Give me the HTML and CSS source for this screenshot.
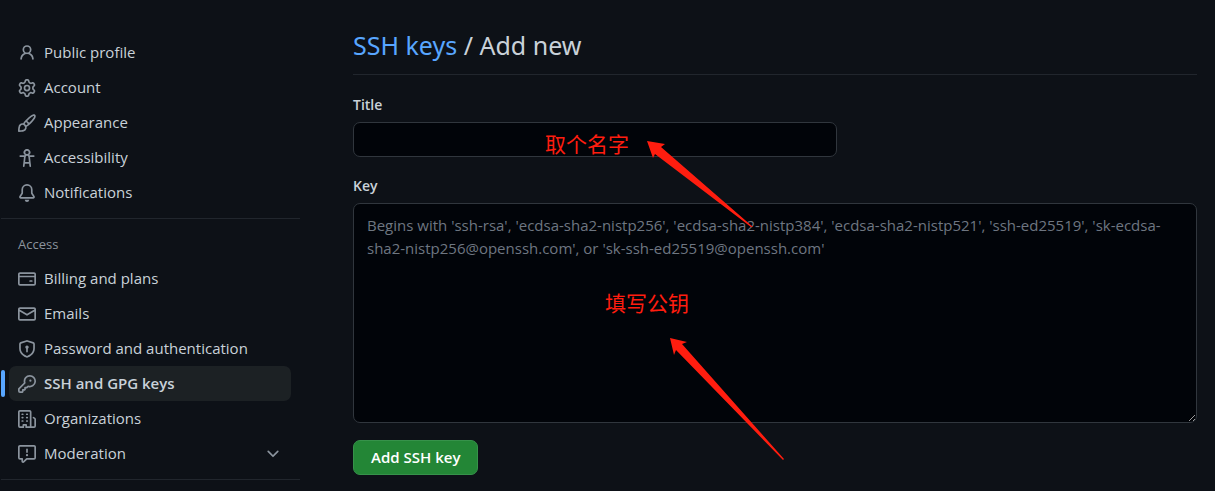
FILE: index.html
```html
<!DOCTYPE html>
<html lang="en">
<head>
<meta charset="utf-8">
<meta name="viewport" content="width=device-width, initial-scale=1">
<title>Add new SSH key</title>
<link rel="stylesheet" href="styles.css">
</head>
<body>
<div class="layout">
  <nav class="sidebar" aria-label="Settings">
    <ul class="nav-list">
      <li><a class="nav-item" href="#profile"><svg class="icon" viewBox="0 0 16 16" aria-hidden="true"><path d="M10.561 8.073a6.005 6.005 0 0 1 3.432 5.142.75.75 0 1 1-1.498.07 4.5 4.5 0 0 0-8.99 0 .75.75 0 0 1-1.498-.07 6.004 6.004 0 0 1 3.431-5.142 3.999 3.999 0 1 1 5.123 0ZM10.5 5a2.5 2.5 0 1 0-5 0 2.5 2.5 0 0 0 5 0Z"/></svg><span>Public profile</span></a></li>
      <li><a class="nav-item" href="#account"><svg class="icon" viewBox="0 0 16 16" aria-hidden="true"><path d="M8 0a8.2 8.2 0 0 1 .701.031C9.444.095 9.99.645 10.16 1.29l.288 1.107c.018.066.079.158.212.224.231.114.454.243.668.386.123.082.233.09.299.071l1.103-.303c.644-.176 1.392.021 1.82.63.27.385.506.792.704 1.218.315.675.111 1.422-.364 1.891l-.814.806c-.049.048-.098.147-.088.294.016.257.016.515 0 .772-.01.147.038.246.088.294l.814.806c.475.469.679 1.216.364 1.891a7.977 7.977 0 0 1-.704 1.217c-.428.61-1.176.807-1.82.63l-1.102-.302c-.067-.019-.177-.011-.3.071a5.909 5.909 0 0 1-.668.386c-.133.066-.194.158-.211.224l-.29 1.106c-.168.646-.715 1.196-1.458 1.26a8.006 8.006 0 0 1-1.402 0c-.743-.064-1.289-.614-1.458-1.26l-.289-1.106c-.018-.066-.079-.158-.212-.224a5.738 5.738 0 0 1-.668-.386c-.123-.082-.233-.09-.299-.071l-1.103.303c-.644.176-1.392-.021-1.82-.63a8.12 8.12 0 0 1-.704-1.218c-.315-.675-.111-1.422.363-1.891l.815-.806c.05-.048.098-.147.088-.294a6.214 6.214 0 0 1 0-.772c.01-.147-.038-.246-.088-.294l-.815-.806C.635 6.045.431 5.298.746 4.623a7.92 7.92 0 0 1 .704-1.217c.428-.61 1.176-.807 1.82-.63l1.102.302c.067.019.177.011.3-.071.214-.143.437-.272.668-.386.133-.066.194-.158.211-.224l.29-1.106C6.009.645 6.556.095 7.299.03 7.53.01 7.764 0 8 0Zm-.571 1.525c-.036.003-.108.036-.137.146l-.289 1.105c-.147.561-.549.967-.998 1.189-.173.086-.34.183-.5.29-.417.278-.97.423-1.529.27l-1.103-.303c-.109-.03-.175.016-.195.045-.22.312-.412.644-.573.99-.014.031-.021.11.059.19l.815.806c.411.406.562.957.53 1.456a4.709 4.709 0 0 0 0 .582c.032.499-.119 1.05-.53 1.456l-.815.806c-.081.08-.073.159-.059.19.162.346.353.677.573.989.02.03.085.076.195.046l1.102-.303c.56-.153 1.113-.008 1.53.27.161.107.328.204.501.29.447.222.85.629.997 1.189l.289 1.105c.029.109.101.143.137.146a6.6 6.6 0 0 0 1.142 0c.036-.003.108-.036.137-.146l.289-1.105c.147-.561.549-.967.998-1.189.173-.086.34-.183.5-.29.417-.278.97-.423 1.529-.27l1.103.303c.109.029.175-.016.195-.045.22-.313.411-.644.573-.99.014-.031.021-.11-.059-.19l-.815-.806c-.411-.406-.562-.957-.53-1.456a4.709 4.709 0 0 0 0-.582c-.032-.499.119-1.05.53-1.456l.815-.806c.081-.08.073-.159.059-.19a6.464 6.464 0 0 0-.573-.989c-.02-.03-.085-.076-.195-.046l-1.102.303c-.56.153-1.113.008-1.53-.27a4.44 4.44 0 0 0-.501-.29c-.447-.222-.85-.629-.997-1.189l-.289-1.105c-.029-.11-.101-.143-.137-.146a6.6 6.6 0 0 0-1.142 0ZM11 8a3 3 0 1 1-6 0 3 3 0 0 1 6 0ZM9.5 8a1.5 1.5 0 1 0-3.001.001A1.5 1.5 0 0 0 9.5 8Z"/></svg><span>Account</span></a></li>
      <li><a class="nav-item" href="#appearance"><svg class="icon" viewBox="0 0 16 16" aria-hidden="true"><path d="M11.134 1.535c.7-.509 1.416-.942 2.076-1.155.649-.21 1.463-.267 2.069.34.603.601.568 1.411.368 2.07-.202.668-.624 1.39-1.125 2.096-1.011 1.424-2.496 2.987-3.775 4.249-1.098 1.084-2.132 1.839-3.04 2.3a3.744 3.744 0 0 1-1.055 3.217c-.431.431-1.065.691-1.657.861-.614.177-1.294.287-1.914.357A21.151 21.151 0 0 1 .797 16H.743a.75.75 0 0 1-.743-.743v-.054a21.25 21.25 0 0 1 .13-2.284c.067-.647.187-1.287.358-1.914.17-.591.43-1.226.86-1.657a3.746 3.746 0 0 1 3.227-1.054c.466-.893 1.225-1.907 2.314-2.982 1.271-1.255 2.833-2.75 4.245-3.777ZM1.62 13.089c-.051.464-.086.929-.104 1.395.466-.018.932-.053 1.396-.104a10.511 10.511 0 0 0 1.668-.309c.526-.151.856-.325 1.011-.48a2.25 2.25 0 1 0-3.182-3.182c-.155.155-.329.485-.48 1.01a10.515 10.515 0 0 0-.309 1.67Zm10.396-10.34c-1.224.89-2.605 2.189-3.822 3.384l1.718 1.718c1.21-1.205 2.51-2.597 3.387-3.833.47-.662.78-1.227.912-1.662.134-.444.032-.551.009-.575h-.001V1.78c-.014-.014-.113-.113-.548.027-.432.14-.995.462-1.655.942Zm-4.832 7.266-.001.001a9.859 9.859 0 0 0 1.63-1.142L7.155 7.216a9.7 9.7 0 0 0-1.161 1.607c.482.302.889.71 1.19 1.192Z"/></svg><span>Appearance</span></a></li>
      <li><a class="nav-item" href="#accessibility"><svg class="icon" viewBox="0 0 16 16" aria-hidden="true"><path d="M9.923 5.302c.063.063.122.129.178.198H14A.75.75 0 0 1 14 7h-3.3l.578 5.163.362 2.997a.75.75 0 0 1-1.49.18L9.868 13H6.132l-.282 2.34a.75.75 0 0 1-1.49-.18l.362-2.997L5.3 7H2a.75.75 0 0 1 0-1.5h3.9a2.54 2.54 0 0 1 .176-.198 3 3 0 1 1 3.847 0ZM9.2 7.073h-.001a1.206 1.206 0 0 0-2.398 0L6.305 11.5h3.39ZM9.5 3a1.5 1.5 0 1 0-3.001.001A1.5 1.5 0 0 0 9.5 3Z"/></svg><span>Accessibility</span></a></li>
      <li><a class="nav-item" href="#notifications"><svg class="icon" viewBox="0 0 16 16" aria-hidden="true"><path d="M8 16a2 2 0 0 0 1.985-1.75c.017-.137-.097-.25-.235-.25h-3.5c-.138 0-.252.113-.235.25A2 2 0 0 0 8 16ZM3 5a5 5 0 0 1 10 0v2.947c0 .05.015.098.042.139l1.703 2.555A1.519 1.519 0 0 1 13.482 13H2.518a1.516 1.516 0 0 1-1.263-2.36l1.703-2.554A.255.255 0 0 0 3 7.947Zm5-3.5A3.5 3.5 0 0 0 4.5 5v2.947c0 .346-.102.683-.294.97l-1.703 2.556a.017.017 0 0 0-.003.01l.001.006c0 .002.002.004.004.006l.006.004.007.001h10.964l.007-.001.006-.004.004-.006.001-.007a.017.017 0 0 0-.003-.01l-1.703-2.554a1.745 1.745 0 0 1-.294-.97V5A3.5 3.5 0 0 0 8 1.5Z"/></svg><span>Notifications</span></a></li>
    </ul>
    <h2 class="nav-heading">Access</h2>
    <ul class="nav-list">
      <li><a class="nav-item" href="#billing"><svg class="icon" viewBox="0 0 16 16" aria-hidden="true"><path d="M10.75 9a.75.75 0 0 0 0 1.5h1.5a.75.75 0 0 0 0-1.5h-1.5Z"/><path d="M0 3.75C0 2.784.784 2 1.75 2h12.5c.966 0 1.75.784 1.75 1.75v8.5A1.75 1.75 0 0 1 14.25 14H1.75A1.75 1.75 0 0 1 0 12.25ZM14.5 6.5h-13v5.75c0 .138.112.25.25.25h12.5a.25.25 0 0 0 .25-.25Zm0-2.75a.25.25 0 0 0-.25-.25H1.75a.25.25 0 0 0-.25.25V5h13Z"/></svg><span>Billing and plans</span></a></li>
      <li><a class="nav-item" href="#emails"><svg class="icon" viewBox="0 0 16 16" aria-hidden="true"><path d="M1.75 2h12.5c.966 0 1.75.784 1.75 1.75v8.5A1.75 1.75 0 0 1 14.25 14H1.75A1.75 1.75 0 0 1 0 12.25v-8.5C0 2.784.784 2 1.75 2ZM1.5 12.251c0 .138.112.25.25.25h12.5a.25.25 0 0 0 .25-.25V5.809L8.38 9.397a.75.75 0 0 1-.76 0L1.5 5.809v6.442Zm13-8.181v-.32a.25.25 0 0 0-.25-.25H1.75a.25.25 0 0 0-.25.25v.32L8 7.88Z"/></svg><span>Emails</span></a></li>
      <li><a class="nav-item" href="#password"><svg class="icon" viewBox="0 0 16 16" aria-hidden="true"><path d="m8.533.133 5.25 1.68A1.75 1.75 0 0 1 15 3.48V7c0 1.566-.32 3.182-1.303 4.682-.983 1.498-2.585 2.813-5.032 3.855a1.697 1.697 0 0 1-1.33 0c-2.447-1.042-4.049-2.357-5.032-3.855C1.32 10.182 1 8.566 1 7V3.48a1.75 1.75 0 0 1 1.217-1.667l5.25-1.68a1.748 1.748 0 0 1 1.066 0Zm-.61 1.429.001.001-5.25 1.68a.251.251 0 0 0-.174.237V7c0 1.36.275 2.666 1.057 3.859.784 1.194 2.121 2.342 4.366 3.298a.196.196 0 0 0 .154 0c2.245-.957 3.582-2.103 4.366-3.297C13.225 9.666 13.5 8.358 13.5 7V3.48a.25.25 0 0 0-.174-.238l-5.25-1.68a.25.25 0 0 0-.153 0ZM9.5 6.5c0 .536-.286 1.032-.75 1.3v2.45a.75.75 0 0 1-1.5 0V7.8A1.5 1.5 0 1 1 9.5 6.5Z"/></svg><span>Password and authentication</span></a></li>
      <li><a class="nav-item nav-item-current" href="#keys" aria-current="page"><svg class="icon" viewBox="0 0 16 16" aria-hidden="true"><path d="M10.5 0a5.499 5.499 0 1 1-1.288 10.848l-.932.932a.749.749 0 0 1-.53.22H7v.75a.749.749 0 0 1-.22.53l-.5.5a.749.749 0 0 1-.53.22H5v.75a.749.749 0 0 1-.22.53l-.5.5a.749.749 0 0 1-.53.22h-2A1.75 1.75 0 0 1 0 14.25v-2c0-.199.079-.389.22-.53l4.932-4.932A5.5 5.5 0 0 1 10.5 0Zm-4 5.5c-.001.431.069.86.205 1.269a.75.75 0 0 1-.181.768L1.5 12.56v1.69c0 .138.112.25.25.25h1.69l.06-.06v-1.19a.75.75 0 0 1 .75-.75h1.19l.06-.06v-1.19a.75.75 0 0 1 .75-.75h1.19l1.023-1.025a.75.75 0 0 1 .768-.18A4 4 0 1 0 6.5 5.5ZM11 6a1 1 0 1 1 0-2 1 1 0 0 1 0 2Z"/></svg><span>SSH and GPG keys</span></a></li>
      <li><a class="nav-item" href="#organizations"><svg class="icon" viewBox="0 0 16 16" aria-hidden="true"><path d="M1.75 16A1.75 1.75 0 0 1 0 14.25V1.75C0 .784.784 0 1.75 0h8.5C11.216 0 12 .784 12 1.75v12.5c0 .085-.006.168-.018.25h2.268a.25.25 0 0 0 .25-.25V8.285a.25.25 0 0 0-.111-.208l-1.055-.703a.749.749 0 1 1 .832-1.248l1.055.703c.487.325.779.871.779 1.456v5.965A1.75 1.75 0 0 1 14.25 16h-3.5a.766.766 0 0 1-.197-.026c-.099.017-.2.026-.303.026h-3a.75.75 0 0 1-.75-.75V14h-1v1.25a.75.75 0 0 1-.75.75Zm-.25-1.75c0 .138.112.25.25.25H4v-1.25a.75.75 0 0 1 .75-.75h2.5a.75.75 0 0 1 .75.75v1.25h2.25a.25.25 0 0 0 .25-.25V1.75a.25.25 0 0 0-.25-.25h-8.5a.25.25 0 0 0-.25.25ZM3.75 6h.5a.75.75 0 0 1 0 1.5h-.5a.75.75 0 0 1 0-1.5ZM3 3.75A.75.75 0 0 1 3.75 3h.5a.75.75 0 0 1 0 1.5h-.5A.75.75 0 0 1 3 3.75Zm4 3A.75.75 0 0 1 7.75 6h.5a.75.75 0 0 1 0 1.5h-.5A.75.75 0 0 1 7 6.75ZM7.75 3h.5a.75.75 0 0 1 0 1.5h-.5a.75.75 0 0 1 0-1.5ZM3 9.75A.75.75 0 0 1 3.75 9h.5a.75.75 0 0 1 0 1.5h-.5A.75.75 0 0 1 3 9.75ZM7.75 9h.5a.75.75 0 0 1 0 1.5h-.5a.75.75 0 0 1 0-1.5Z"/></svg><span>Organizations</span></a></li>
      <li><button class="nav-item" type="button" aria-expanded="false"><svg class="icon" viewBox="0 0 16 16" aria-hidden="true"><path d="M0 1.75C0 .784.784 0 1.75 0h12.5C15.216 0 16 .784 16 1.75v9.5A1.75 1.75 0 0 1 14.25 13H8.06l-2.573 2.573A1.458 1.458 0 0 1 3 14.543V13H1.75A1.75 1.75 0 0 1 0 11.25Zm1.75-.25a.25.25 0 0 0-.25.25v9.5c0 .138.112.25.25.25h2a.75.75 0 0 1 .75.75v2.19l2.72-2.72a.749.749 0 0 1 .53-.22h6.5a.25.25 0 0 0 .25-.25v-9.5a.25.25 0 0 0-.25-.25Zm7 2.25v2.5a.75.75 0 0 1-1.5 0v-2.5a.75.75 0 0 1 1.5 0ZM9 9a1 1 0 1 1-2 0 1 1 0 0 1 2 0Z"/></svg><span class="nav-label">Moderation</span><svg class="icon" viewBox="0 0 16 16" aria-hidden="true"><path d="M12.78 5.22a.749.749 0 0 1 0 1.06l-4.25 4.25a.749.749 0 0 1-1.06 0L3.22 6.28a.749.749 0 1 1 1.06-1.06L8 8.939l3.72-3.719a.749.749 0 0 1 1.06 0Z"/></svg></button></li>
    </ul>
  </nav>
  <main class="content">
    <h1 class="page-title"><a class="title-link" href="#keys">SSH keys</a> / Add new</h1>
    <form class="key-form">
      <div class="field">
        <label class="field-label" for="key-title">Title</label>
        <input class="text-box title-box" id="key-title" type="text">
        <span class="note note-title" lang="zh">取个名字</span>
        <svg class="arrow arrow-title" width="106" height="87" viewBox="0 0 106 87" aria-hidden="true"><path d="M0 0 18 3 14 6 106 86 104 86 8 13 6 17Z"/></svg>
      </div>
      <div class="field">
        <label class="field-label" for="key-body">Key</label>
        <textarea class="text-box key-box" id="key-body" placeholder="Begins with 'ssh-rsa', 'ecdsa-sha2-nistp256', 'ecdsa-sha2-nistp384', 'ecdsa-sha2-nistp521', 'ssh-ed25519', 'sk-ecdsa-sha2-nistp256@openssh.com', or 'sk-ssh-ed25519@openssh.com'"></textarea>
        <span class="note note-key" lang="zh">填写公钥</span>
        <svg class="arrow arrow-key" width="115" height="123" viewBox="0 0 115 123" aria-hidden="true"><path d="M0 0 17 4 12 6 114 121 113 122 6 12 4 17Z"/></svg>
      </div>
      <button class="submit" type="submit">Add SSH key</button>
    </form>
  </main>
</div>
</body>
</html>
```
FILE: styles.css
```css
* {
  box-sizing: border-box;
}

body {
  margin: 0;
  background: #0d1117;
  color: #c9d1d9;
  font: 15px/23px "Open Sans", "Noto Sans CJK SC", sans-serif;
}

.layout {
  display: grid;
  grid-template-columns: 299px minmax(0, 1fr);
  gap: 53px;
  padding: 26px 18px 0 1px;
}

.nav-list {
  list-style: none;
  margin: 0;
  padding: 9px 9px 8px 8px;
  border-bottom: 1px solid #21262d;
}

.nav-heading + .nav-list {
  padding-top: 0;
}

.nav-heading {
  margin: 0;
  padding: 15px 17px 7px;
  color: #8b949e;
  font-size: 13px;
  line-height: 20px;
  font-weight: 500;
}

.nav-item {
  position: relative;
  display: flex;
  align-items: center;
  gap: 8px;
  width: 100%;
  padding: 6px 9px;
  border: 0;
  border-radius: 7px;
  background: none;
  color: inherit;
  font: inherit;
  text-align: left;
  text-decoration: none;
}

.nav-item-current {
  background: #1c2124;
  font-weight: 600;
}

.nav-item-current::before {
  content: "";
  position: absolute;
  left: -8px;
  top: 4px;
  bottom: 4px;
  width: 4px;
  border-radius: 2px;
  background: #58a6ff;
}

.nav-label {
  flex: 1;
}

.icon {
  flex: none;
  width: 18px;
  height: 18px;
  fill: #8b949e;
}

.page-title {
  margin: 0;
  padding-bottom: 9px;
  border-bottom: 1px solid #21262d;
  font: 25px/39px "Noto Sans", sans-serif;
}

.title-link {
  color: #58a6ff;
  text-decoration: none;
}

.key-form {
  padding-top: 18px;
}

.field {
  position: relative;
  margin-bottom: 17px;
}

.field-label {
  display: block;
  margin-bottom: 6px;
  font-size: 14px;
  font-weight: 600;
}

.text-box {
  display: block;
  padding: 5px 13px;
  border: 1px solid #30363d;
  border-radius: 7px;
  background: #010409;
  color: inherit;
  font: inherit;
}

.title-box {
  width: 100%;
  max-width: 484px;
}

.key-box {
  width: 100%;
  height: 220px;
  padding-top: 10px;
}

.key-box::placeholder {
  color: #6e7681;
}

.note {
  position: absolute;
  color: #ff1d0f;
  font: 21px/30px "Noto Sans CJK SC", sans-serif;
}

.note-title {
  left: 192px;
  top: 35px;
}

.note-key {
  left: 252px;
  top: 113px;
}

.arrow {
  position: absolute;
  z-index: 1;
  fill: #ff1d0f;
}

.arrow-title {
  left: 294px;
  top: 48px;
}

.arrow-key {
  left: 317px;
  top: 164px;
}

.submit {
  padding: 5px 17px;
  border: 1px solid #36924a;
  border-radius: 7px;
  background: #238636;
  color: #fff;
  font: inherit;
  font-weight: 600;
}
```
